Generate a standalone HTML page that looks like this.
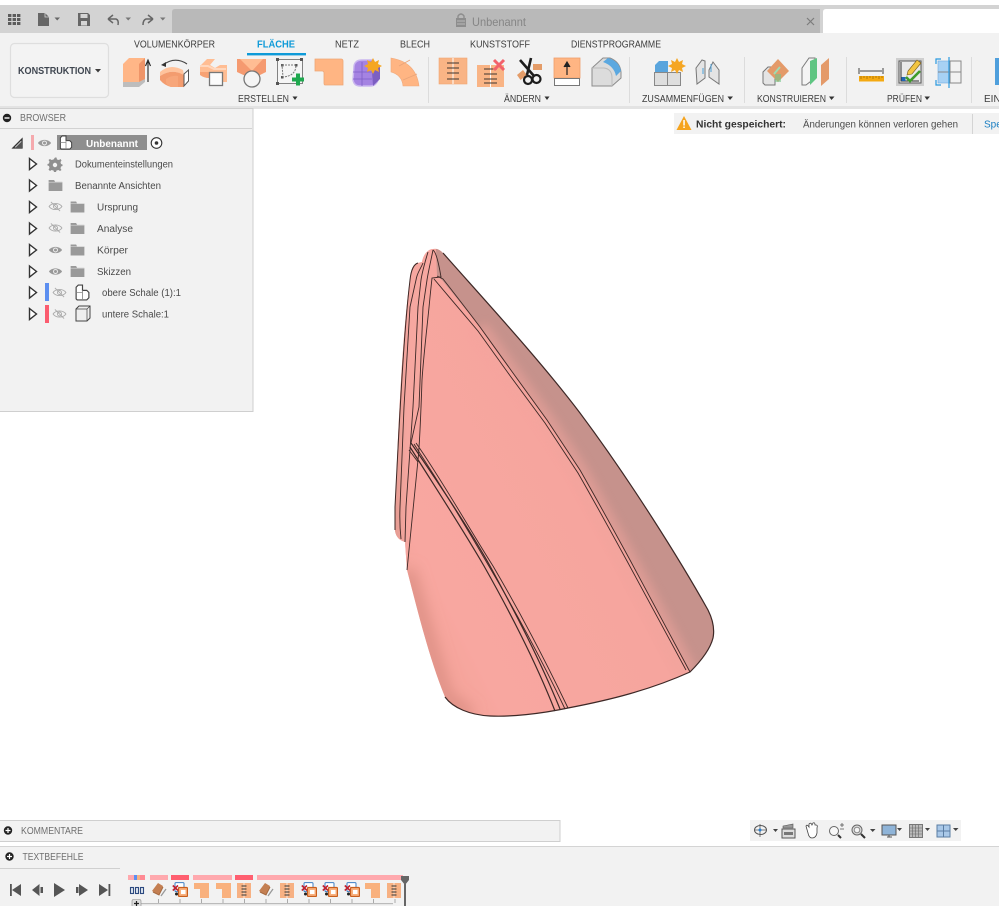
<!DOCTYPE html>
<html><head><meta charset="utf-8"><style>
html,body{margin:0;padding:0;background:#fff;width:999px;height:906px;overflow:hidden}
svg{display:block;filter:blur(.3px)}
text{font-family:"Liberation Sans",sans-serif}
.t{font-size:10px;fill:#3c3c3c}
.b{font-size:10px;fill:#4a4a4a}
.g{font-size:10px;fill:#6e6e6e}
</style></head><body>
<svg width="999" height="906" viewBox="0 0 999 906" xmlns="http://www.w3.org/2000/svg">
<defs>
<linearGradient id="main" gradientUnits="userSpaceOnUse" x1="405" y1="600" x2="640" y2="480"><stop offset="0" stop-color="#f4a399"/><stop offset=".14" stop-color="#f8a7a0"/><stop offset=".75" stop-color="#f6a59e"/><stop offset="1" stop-color="#eba29b"/></linearGradient>
<linearGradient id="strip" gradientUnits="userSpaceOnUse" x1="395" y1="0" x2="430" y2="0"><stop offset="0" stop-color="#e59c92"/><stop offset=".35" stop-color="#f5a7a0"/><stop offset="1" stop-color="#f8a8a1"/></linearGradient>
<filter id="bl6" x="-50%" y="-50%" width="200%" height="200%"><feGaussianBlur stdDeviation="7"/></filter>
<filter id="bl3" x="-50%" y="-50%" width="200%" height="200%"><feGaussianBlur stdDeviation="5"/></filter>
<clipPath id="bodyclip"><path d="M443 253C480 295 540 360 580 413C630 480 680 560 708 610C712 618 715 628 713 638C710 650 700 662 690 672C650 690 610 700 568 708C540 714 510 717 490 716C470 715 453 708 445 697C430 660 420 620 407 570L405 542C398 540 394 535 395 525C396 470 402 330 410 280C411 270 413 264 418 263L422 262C423 255 428 249 433 249C437 248 440 250 443 253Z"/></clipPath>
<symbol id="tri" viewBox="0 0 10 14"><path d="M1.500 1.500 L8.500 7 L1.500 12.500Z" fill="#fff" stroke="#333" stroke-width="1.400"/></symbol>
<symbol id="eye" viewBox="0 0 16 10"><path d="M1 5C4 0.500 12 0.500 15 5C12 9.500 4 9.500 1 5Z" fill="#999"/><circle cx="8" cy="5" r="2.600" fill="#f2f2f2"/><circle cx="8" cy="5" r="1.600" fill="#999"/></symbol>
<symbol id="eyeoff" viewBox="0 0 16 12"><path d="M1 6C4 1.500 12 1.500 15 6C12 10.500 4 10.500 1 6Z" fill="none" stroke="#aaa" stroke-width="1"/><circle cx="8" cy="6" r="2.200" fill="none" stroke="#aaa"/><path d="M3 1L13 11" stroke="#aaa" stroke-width="1"/></symbol>
<symbol id="folder" viewBox="0 0 15 12"><path d="M0 0H6L7 2H15V12H0Z" fill="#999"/><path d="M0 2.400H15" stroke="#ddd" stroke-width=".6"/></symbol>
<symbol id="part" viewBox="0 0 14 16"><path d="M1 14V3L3 1H7V6H11L13 8V13L11 15H2Z" fill="#fff" stroke="#444" stroke-width="1.100"/><path d="M7 6V15M1 8H7" stroke="#888" stroke-width=".8"/></symbol>
<symbol id="ell" viewBox="0 0 30 30"><path d="M1 3H27Q29 3 29 5V29H11Q10 29 10 27V17Q10 15 8 15H1Z" fill="#ffb583" stroke="#eea777" stroke-width=".8"/></symbol>
<symbol id="sew" viewBox="0 0 30 30"><rect x="1" y="2" width="28" height="26" fill="#f9b485" stroke="#f0a672" stroke-width=".6"/><path d="M15 2V28" stroke="#fff" stroke-width="1"/><path d="M9 7H21M9 12H21M9 17H21M9 23H21" stroke="#3d3530" stroke-width="1.100"/></symbol>
<symbol id="tsew" viewBox="0 0 14 15"><rect x="0" y="0" width="14" height="15" fill="#f7b183"/><path d="M7 0V15" stroke="#fff" stroke-width=".7"/><path d="M4.500 3H9.500M4.500 6H9.500M4.500 9H9.500M4.500 12H9.500" stroke="#333" stroke-width="1"/></symbol>
<symbol id="tell" viewBox="0 0 15 15"><path d="M0 0H15V15H6V6H0Z" fill="#f9b17e"/></symbol>
<symbol id="tsolid" viewBox="0 0 16 15"><path d="M1 9L7 1L12 4L8 13Z" fill="#c47f52"/><path d="M2 10L8 13L12 5" stroke="#a4683f" fill="none"/><path d="M10 14L15 7" stroke="#999" stroke-width="1.300"/></symbol>
<symbol id="tx" viewBox="0 0 16 15"><rect x="3" y="0.600" width="9" height="9" fill="#fff" stroke="#3d7fc4" stroke-width="1" rx="1"/><rect x="6.500" y="5.500" width="9" height="9" fill="#f9b17e" stroke="#c95f1e" stroke-width="1.200" rx="1"/><rect x="9" y="8" width="4.500" height="4" fill="#fff"/><path d="M.8 3.500L6 8.500M6 3.500L.8 8.500" stroke="#c2212e" stroke-width="1.600"/><circle cx="4.500" cy="12" r="1.500" fill="#222"/></symbol>
</defs>

<rect width="999" height="906" fill="#fff"/>

<!-- top bar -->
<rect x="0" y="5" width="999" height="28" fill="#d3d3d3"/>
<path d="M172 33V12Q172 9 175 9H820V33Z" fill="#b9b9b9"/>
<path d="M823 33V12Q823 9 826 9H999V33Z" fill="#fff"/>
<g fill="#5c5c5c"><rect x="8" y="14" width="3.400" height="3"/><rect x="12.600" y="14" width="3.400" height="3"/><rect x="17" y="14" width="3.400" height="3"/><rect x="8" y="18" width="3.400" height="3"/><rect x="12.600" y="18" width="3.400" height="3"/><rect x="17" y="18" width="3.400" height="3"/><rect x="8" y="22" width="3.400" height="3"/><rect x="12.600" y="22" width="3.400" height="3"/><rect x="17" y="22" width="3.400" height="3"/></g>
<path d="M38 13H45L49 17V26H38Z" fill="#666"/><path d="M45 13V17H49" fill="none" stroke="#d5d5d5" stroke-width=".8"/>
<path d="M54.500 17.500H60L57.200 20.500Z" fill="#666"/>
<path d="M78 13H88L90 15V26H78Z" fill="#666"/><rect x="80.500" y="14" width="7" height="4" fill="#d5d5d5"/><rect x="81" y="21" width="6" height="4.500" fill="#d5d5d5"/>
<path d="M108 19L113 15M108 19L113 23M108 19H116Q119 20 118 25" fill="none" stroke="#666" stroke-width="1.500"/>
<path d="M125.500 17.500H131L128.200 20.500Z" fill="#777"/>
<path d="M153 19L148 15M153 19L148 23M153 19H146Q143 20 143 25" fill="none" stroke="#666" stroke-width="1.500"/>
<path d="M160 17.500H165.500L162.800 20.500Z" fill="#777"/>
<rect x="456" y="18" width="10" height="9" fill="#8d8d8d"/><path d="M458 18V16Q461 12 464 16V18" fill="none" stroke="#8d8d8d" stroke-width="1.400"/><path d="M457 21H465M457 24H465" stroke="#b9b9b9"/>
<text x="472" y="26" font-size="12" fill="#858585" textLength="54" lengthAdjust="spacingAndGlyphs">Unbenannt</text>
<path d="M807 18L814 25M814 18L807 25" stroke="#7c7c7c" stroke-width="1.200"/>

<!-- ribbon -->
<rect x="0" y="33" width="999" height="73" fill="#f2f2f2"/>
<rect x="0" y="106" width="999" height="3" fill="#e3e3e3"/>
<rect x="10.500" y="43.500" width="98" height="54" rx="4" fill="#f3f3f3" stroke="#dedede" stroke-width="1.200"/>
<text x="18" y="74" font-size="10" font-weight="bold" fill="#3f4650" textLength="73" lengthAdjust="spacingAndGlyphs">KONSTRUKTION</text>
<path d="M95 69H101L98 72.500Z" fill="#3c3c3c"/>
<text class="t" x="134" y="47.500" textLength="81" lengthAdjust="spacingAndGlyphs">VOLUMENKÖRPER</text>
<text x="257" y="47.500" font-size="10" font-weight="bold" fill="#0e9ad8" textLength="38" lengthAdjust="spacingAndGlyphs">FLÄCHE</text>
<rect x="247" y="53" width="59" height="2.400" fill="#0e9ad8"/>
<text class="t" x="335" y="47.500" textLength="24" lengthAdjust="spacingAndGlyphs">NETZ</text>
<text class="t" x="400" y="47.500" textLength="30" lengthAdjust="spacingAndGlyphs">BLECH</text>
<text class="t" x="470" y="47.500" textLength="60" lengthAdjust="spacingAndGlyphs">KUNSTSTOFF</text>
<text class="t" x="571" y="47.500" textLength="90" lengthAdjust="spacingAndGlyphs">DIENSTPROGRAMME</text>
<text class="t" x="238" y="102" textLength="51" lengthAdjust="spacingAndGlyphs">ERSTELLEN</text><path d="M292.500 96.500H297.500L295 100Z" fill="#333"/>
<text class="t" x="504" y="102" textLength="37" lengthAdjust="spacingAndGlyphs">ÄNDERN</text><path d="M544.500 96.500H549.500L547 100Z" fill="#333"/>
<text class="t" x="642" y="102" textLength="82" lengthAdjust="spacingAndGlyphs">ZUSAMMENFÜGEN</text><path d="M727.500 96.500H733L730 100Z" fill="#333"/>
<text class="t" x="757" y="102" textLength="69" lengthAdjust="spacingAndGlyphs">KONSTRUIEREN</text><path d="M829 96.500H834.500L831.500 100Z" fill="#333"/>
<text class="t" x="887" y="102" textLength="35" lengthAdjust="spacingAndGlyphs">PRÜFEN</text><path d="M924.500 96.500H930L927 100Z" fill="#333"/>
<text class="t" x="984" y="102">EINFÜGEN</text>
<g fill="#dcdcdc"><rect x="428" y="57" width="1" height="46"/><rect x="629" y="57" width="1" height="46"/><rect x="744" y="57" width="1" height="46"/><rect x="846" y="57" width="1" height="46"/><rect x="971" y="57" width="1" height="46"/></g>

<!-- extrude -->
<path d="M123 64L129 58H145V80L142 82H123Z" fill="#ffb687"/><path d="M139 64L145 58V79L139 82Z" fill="#ef9468"/><path d="M123 64H139V82H123Z" fill="#ffb687"/>
<path d="M123 82H139L145 79V82L139 87H123Z" fill="#bdbdbd"/>
<path d="M148 82V62M145.500 66L148 60L150.500 66" fill="none" stroke="#222" stroke-width="1.100"/>
<!-- revolve -->
<path d="M160 72Q170 63 183 70L184 75Q172 68 160 76Z" fill="#ffc39c"/>
<path d="M160 76Q172 68 184 75V87H171Q164 85 160 80Z" fill="#f39c6f"/>
<path d="M166 79Q172 75 178 76V87H171Q166 85 166 82Z" fill="#f7a67a"/>
<path d="M184 74L188.500 70V81L184 86Z" fill="#fff" stroke="#555"/>
<path d="M163 65Q175 56 187 64" fill="none" stroke="#444" stroke-width="1.100"/><path d="M161 65L166 62V67Z" fill="#333"/>
<!-- patch -->
<path d="M200 66L207 59H215L210 65L215 68L220 65H227V82H222V72H200Z" fill="#ffbd93"/><path d="M200 66H208L214 69H226" stroke="#ffd7bd" stroke-width="2" fill="none"/>
<path d="M200 72H209V78Q204 78 200 75Z" fill="#f7a274"/>
<rect x="209.500" y="72.500" width="13" height="13" fill="#fbfbfb" stroke="#777" stroke-width="1.300"/>
<!-- loft -->
<path d="M237 59H266V72L252 79L237 72Z" fill="#f59a70"/><path d="M240 59H263L252 71Z" fill="#ffbd93"/>
<circle cx="252" cy="79" r="8" fill="#f5f5f5" stroke="#777" stroke-width="1.300"/>
<!-- sketch -->
<rect x="277.500" y="59.500" width="25" height="24" fill="#f5f5f5" stroke="#666" stroke-width=".8"/>
<g fill="#555"><rect x="276" y="58" width="3" height="3"/><rect x="300" y="58" width="3" height="3"/><rect x="276" y="82" width="3" height="3"/><rect x="281" y="64" width="2.500" height="2.500"/><rect x="281" y="76" width="2.500" height="2.500"/><rect x="295" y="64" width="2.500" height="2.500"/></g>
<path d="M282 65H296Q296 76 283 77Z" fill="none" stroke="#777" stroke-dasharray="2 1"/>
<rect x="292" y="77.500" width="12" height="4" fill="#1fa84f"/><rect x="296" y="73.500" width="4" height="12" fill="#1fa84f"/>
<use href="#ell" x="314" y="56" width="30" height="30"/>
<!-- purple -->
<path d="M354 66Q355 60 362 60H372L378 66V80Q376 86 370 86H360Q354 86 353 80Z" fill="#a583e2" stroke="#c9b6ef" stroke-width="1.400"/>
<path d="M372 72L380 66V79L373 86Z" fill="#7d5fc2"/><path d="M353 72H372M362 62V86M353 79H372" stroke="#7e5fc6" stroke-width=".8"/>
<path d="M373 58L375 62L379 60L378 64L382 66L378 68L379 72L375 70L373 74L371 70L367 72L368 68L364 66L368 64L367 60L371 62Z" fill="#f5a623"/>
<!-- arc -->
<path d="M391 58Q416 62 419 86H403Q402 75 391 72Z" fill="#ffb583" stroke="#f0aa7c" stroke-width=".6"/><path d="M399 66L410 60M403 80L417 74" stroke="#e8a47a" stroke-width=".8"/>
<use href="#sew" x="438" y="56" width="30" height="30"/>
<g transform="translate(477,65)"><rect width="27" height="22" fill="#f9b485"/><path d="M13.500 0V22" stroke="#fff"/><path d="M7 4H20M7 9H20M7 14H20M7 18H20" stroke="#3d3530" stroke-width="1.100"/></g>
<path d="M494 60L504 70M504 60L494 70" stroke="#f2616b" stroke-width="3"/>
<!-- scissors -->
<path d="M517 75L523 70L527 75L520.500 80Z" fill="#e49c68"/><rect x="533" y="64" width="9" height="6" fill="#e49c68"/>
<path d="M520 60L534 76M531 58L527 75" stroke="#1c1c1c" stroke-width="2.600"/>
<circle cx="528" cy="80" r="4" fill="#f2f2f2" stroke="#1c1c1c" stroke-width="2.200"/><circle cx="536.500" cy="79" r="4" fill="#f2f2f2" stroke="#1c1c1c" stroke-width="2.200"/>
<!-- thicken up -->
<rect x="554" y="58" width="26" height="20" fill="#ffb583" stroke="#ef9e6b" stroke-width=".8"/><path d="M567 75V64M564 67L567 62L570 67" fill="#222" stroke="#222" stroke-width="1.200"/>
<rect x="554.500" y="78.500" width="25" height="7" fill="#fff" stroke="#777" stroke-width="1"/>
<!-- fillet -->
<path d="M592 68L603 58H610Q620 62 621 72V78L612 86H592Z" fill="#dcdcdc" stroke="#8c8c8c"/>
<path d="M603 62L608 58Q619 61 621 71L616 76Q614 66 603 62Z" fill="#5ba8e0"/><path d="M592 68H604Q612 69 612 78V86" fill="none" stroke="#bbb"/>
<!-- combine -->
<rect x="654.500" y="72.500" width="13" height="13" fill="#dedede" stroke="#888"/><rect x="667.500" y="72.500" width="13" height="13" fill="#dedede" stroke="#888"/>
<path d="M655 65L659 61H668V72H655Z" fill="#5aa5dd"/>
<path d="M677 58L679 62L683 60L682 64L686 66L682 68L683 72L679 70L677 74L675 70L671 72L672 68L668 66L672 64L671 60L675 62Z" fill="#f5a623"/>
<!-- joint -->
<path d="M696 68L702 60L705 61V78L697 84Z" fill="#e4e4e4" stroke="#777"/><path d="M713 62L719 70V84L709 77V70Z" fill="#e4e4e4" stroke="#777"/><path d="M703 68V74M711 64V72" stroke="#4a9fd8"/>
<!-- construct -->
<path d="M763 72L768 67H775V85H765L763 83Z" fill="#e4e4e4" stroke="#777"/>
<path d="M767 71L778 59L789 71L778 82Z" fill="#e49a69"/><path d="M774 74L780 67" stroke="#9fdcb1" stroke-width="2"/><path d="M775 74H781V82H775Z" fill="#74c78a" opacity=".6"/>
<path d="M802 68L809 58H815V78L806 85H802Z" fill="#f4f4f4" stroke="#7b7b7b"/>
<path d="M810 61L817 58V78L810 85Z" fill="#5fc582"/><path d="M821 65L829 58V79L821 86Z" fill="#e49a69"/>
<!-- ruler -->
<path d="M859 68V74M883 68V74M860 71H882" stroke="#444" fill="none"/>
<rect x="859" y="76" width="25" height="5.500" fill="#f4a911"/><path d="M861 76V79M864 76V78M867 76V79M870 76V78M873 76V79M876 76V78M879 76V79M882 76V78" stroke="#8a5c00" stroke-width=".6"/>
<!-- inspector -->
<rect x="896" y="58" width="28" height="28" fill="#cfcfcf"/>
<rect x="899" y="61" width="22" height="22" fill="#e9e9e9" stroke="#5a5a5a"/>
<path d="M901 62V81H919" stroke="#333" fill="none"/><rect x="901.500" y="77" width="4" height="4" fill="#2166b8"/>
<path d="M908 71L917 60L921 63L912 74L907 75Z" fill="#f2c542" stroke="#7a5c1a" stroke-width=".6"/>
<path d="M906 77L910 81L920 71" stroke="#3f9c2b" stroke-width="2.600" fill="none"/>
<!-- section -->
<rect x="938" y="61" width="12" height="22" fill="#a7d1f4" stroke="#6ea9de" stroke-width=".6"/><rect x="950" y="61" width="11" height="22" fill="#f2f2f2" stroke="#888"/><path d="M938 72H961" stroke="#888"/>
<path d="M949 57V88" stroke="#2a9ae0" stroke-width="1.200"/><path d="M941 59H936V64M936 80V85H941" stroke="#2a9ae0" stroke-width="1.200" fill="none"/>
<rect x="995" y="58" width="4" height="27" fill="#4f9fdc"/>

<!-- notification -->
<rect x="674" y="113" width="325" height="21" fill="#f2f2f2"/>
<rect x="972" y="114" width="1" height="20" fill="#d4d4d4"/>
<path d="M684 116L691.500 130H676.500Z" fill="#f5a41f"/><rect x="683.300" y="120" width="1.500" height="5.500" fill="#fff"/><rect x="683.300" y="126.500" width="1.500" height="1.500" fill="#fff"/>
<text x="696" y="127.500" font-size="10" font-weight="bold" fill="#333" textLength="90" lengthAdjust="spacingAndGlyphs">Nicht gespeichert:</text>
<text x="803" y="127.500" font-size="10" fill="#4a4a4a" textLength="155" lengthAdjust="spacingAndGlyphs">Änderungen können verloren gehen</text>
<text x="984" y="127.500" font-size="10" fill="#1b7fc2">Speichern</text>

<!-- browser -->
<rect x="-1" y="108.500" width="254" height="303" fill="#f2f2f2" stroke="#cfcfcf"/>
<rect x="0" y="128" width="252" height="1" fill="#d2d2d2"/>
<circle cx="7" cy="118" r="4.200" fill="#222"/><rect x="4.500" y="117.300" width="5" height="1.400" fill="#fff"/>
<text class="g" x="20" y="121" textLength="46" lengthAdjust="spacingAndGlyphs">BROWSER</text>
<path d="M13 148L22 139V148Z" fill="none" stroke="#333" stroke-width="1.300"/><path d="M15 148L22 141V148Z" fill="#555"/>
<rect x="31" y="135" width="3" height="15" fill="#f5a9ad"/>
<use href="#eye" x="37" y="138" width="15" height="10"/>
<rect x="57" y="135" width="90" height="15" fill="#8e8e8e"/>
<use href="#part" x="59" y="135" width="14" height="15"/>
<text x="86" y="147" font-size="10" font-weight="bold" fill="#fff" textLength="52" lengthAdjust="spacingAndGlyphs">Unbenannt</text>
<circle cx="156.500" cy="143" r="5.300" fill="#fff" stroke="#333" stroke-width="1.100"/><circle cx="156.500" cy="143" r="1.800" fill="#333"/>
<use href="#tri" x="28" y="157" width="10" height="14"/>
<path d="M55 157.500L56.500 157.500L57 159.500L59 160L60.500 159L61.500 160.500L60.500 162L61 164L62.500 164.500V166L61 166.500L60.500 168.500L61.500 170L60 171L58.500 170L56.500 170.500L56 172H54L53.500 170.500L51.500 170L50 171L48.500 169.500L49.500 168L49 166L47.500 165.500V164L49 163.500L49.500 161.500L48.500 160L50 159L51.500 160L53.500 159.500Z" fill="#8f8f8f"/><circle cx="55" cy="165" r="2.200" fill="#f2f2f2"/>
<text class="b" x="75" y="167.500" textLength="98" lengthAdjust="spacingAndGlyphs">Dokumenteinstellungen</text>
<use href="#tri" x="28" y="178.500" width="10" height="14"/>
<use href="#folder" x="48" y="180" width="15" height="11"/>
<text class="b" x="75" y="189" textLength="86" lengthAdjust="spacingAndGlyphs">Benannte Ansichten</text>
<use href="#tri" x="28" y="200" width="10" height="14"/>
<use href="#eyeoff" x="48" y="201" width="15" height="11"/>
<use href="#folder" x="70" y="201.500" width="15" height="11"/>
<text class="b" x="97" y="210.500" textLength="41" lengthAdjust="spacingAndGlyphs">Ursprung</text>
<use href="#tri" x="28" y="221.500" width="10" height="14"/>
<use href="#eyeoff" x="48" y="222.500" width="15" height="11"/>
<use href="#folder" x="70" y="223" width="15" height="11"/>
<text class="b" x="97" y="232" textLength="36" lengthAdjust="spacingAndGlyphs">Analyse</text>
<use href="#tri" x="28" y="243" width="10" height="14"/>
<use href="#eye" x="48" y="245" width="15" height="10"/>
<use href="#folder" x="70" y="244.500" width="15" height="11"/>
<text class="b" x="97" y="253.500" textLength="31" lengthAdjust="spacingAndGlyphs">Körper</text>
<use href="#tri" x="28" y="264.500" width="10" height="14"/>
<use href="#eye" x="48" y="266.500" width="15" height="10"/>
<use href="#folder" x="70" y="266" width="15" height="11"/>
<text class="b" x="97" y="275" textLength="34" lengthAdjust="spacingAndGlyphs">Skizzen</text>
<use href="#tri" x="28" y="285.500" width="10" height="14"/>
<rect x="45" y="283" width="4" height="18" fill="#5c8ff0"/>
<use href="#eyeoff" x="52" y="287" width="15" height="11"/>
<use href="#part" x="75" y="284" width="15" height="17"/>
<text class="b" x="102" y="296" textLength="79" lengthAdjust="spacingAndGlyphs">obere Schale (1):1</text>
<use href="#tri" x="28" y="307" width="10" height="14"/>
<rect x="45" y="305" width="4" height="18" fill="#fb5c6f"/>
<use href="#eyeoff" x="52" y="308.500" width="15" height="11"/>
<path d="M76 309L79 306H90V318L87 321H76Z" fill="#efefef" stroke="#444"/><path d="M76 309H87V321M87 309L90 306" fill="none" stroke="#444" stroke-width=".7"/>
<text class="b" x="102" y="317.500" textLength="67" lengthAdjust="spacingAndGlyphs">untere Schale:1</text>

<!-- 3D body -->
<path d="M443 253C480 295 540 360 580 413C630 480 680 560 708 610C712 618 715 628 713 638C710 650 700 662 690 672C650 690 610 700 568 708C540 714 510 717 490 716C470 715 453 708 445 697C430 660 420 620 407 570L405 542C398 540 394 535 395 525C396 470 402 330 410 280C411 270 413 264 418 263L422 262C423 255 428 249 433 249C437 248 440 250 443 253Z" fill="url(#main)"/>
<g clip-path="url(#bodyclip)">
<!-- left strips -->
<path d="M390 240H434L428 273L423 307L419 407L411 443L407 570L390 570Z" fill="url(#strip)"/>
<!-- shaded side -->
<path d="M436 248L460 250L720 600L720 680L690 672L630 560L580 470L547 420L513 373L480 327L442 280L437 276Z" fill="#c6928c"/>
<!-- soft transition along the inner edge of the shaded side -->
<path d="M480 327L513 373L547 420L580 470L630 560L690 672" fill="none" stroke="#f3a59e" stroke-width="14" filter="url(#bl3)" opacity=".55"/>
<!-- lower-left shading -->
<path d="M407 570L445 697L470 716" fill="none" stroke="#dd9085" stroke-width="14" filter="url(#bl6)"/>
</g>
<g fill="none" stroke="#3d2826" stroke-width=".9">
<path d="M443 253C480 295 540 360 580 413C630 480 680 560 708 610C712 618 715 628 713 638C710 650 700 662 690 672C650 690 610 700 568 708C540 714 510 717 490 716C470 715 453 708 445 697" stroke-width="1.200"/>
<path d="M418 263C414 264 411 270 410 280C404 330 400 407 395 507C395 515 395 525 395 530" stroke-width="1"/>
<path d="M423 263C420 270 417 273 416 280L410 307L404 407L400 507C399.500 520 400 530 401 539"/>
<path d="M428 252C425 262 422 273 421 280L418 307L413 407L406 507L405 542"/>
<path d="M433 250C431 260 428 273 427 280L423 307L419 407L411 443"/>
<path d="M433 250C436 252 439 265 441 277L432 278L430 297"/>
<path d="M430 297C428 320 424 350 422 380C421 410 420 440 418 460L407 570"/>
<path d="M437 276L443 279C458 298 480 327 480 327C490 341 513 373 513 373L547 420L580 470C600 505 630 560 630 560L690 672"/>
<path d="M434 279C450 298 478 331 478 331L511 377L545 423L578 473C598 508 627 561 627 561L686 670"/>
<path d="M411 443C440 485 470 530 490 566C515 612 540 660 560 709" stroke-width="1.200"/>
<path d="M410 447C437 490 462 528 484 566C510 612 535 660 555 711" stroke-width="1.200"/>
<path d="M416 443C442 480 470 530 493 566C520 612 545 660 568 708"/>
<path d="M414 444C440 484 468 530 490 568C517 614 542 660 565 709"/>
<path d="M409 450L418 462"/>
</g>

<!-- kommentare / textbefehle -->
<rect x="-1" y="820.500" width="561" height="21" fill="#f2f2f2" stroke="#cfcfcf"/>
<circle cx="8" cy="830.500" r="4.200" fill="#222"/><path d="M5.500 830.500H10.500M8 828V833" stroke="#fff" stroke-width="1.200"/>
<text class="g" x="21" y="834" textLength="62" lengthAdjust="spacingAndGlyphs">KOMMENTARE</text>
<rect x="750" y="820" width="211" height="21" fill="#f2f2f2"/>
<rect x="-1" y="846.500" width="1001" height="60" fill="#f2f2f2" stroke="#d4d4d4"/>
<rect x="0" y="868" width="120" height="1" fill="#d0d0d0"/>
<circle cx="9.500" cy="856.500" r="4.200" fill="#222"/><path d="M7 856.500H12M9.500 854V859" stroke="#fff" stroke-width="1.200"/>
<text class="g" x="22.500" y="860" textLength="61" lengthAdjust="spacingAndGlyphs">TEXTBEFEHLE</text>

<!-- nav bar icons -->
<path d="M760 824V837M754 830H767" stroke="#555" stroke-width=".8"/><ellipse cx="760.500" cy="830" rx="6" ry="4.500" fill="none" stroke="#555"/><circle cx="760" cy="830" r="1.500" fill="#2a7fd0"/>
<path d="M773 829H778L775.500 832Z" fill="#444"/>
<rect x="782" y="829" width="13" height="9" fill="#ddd" stroke="#555"/><path d="M783 826L793 824V828H783Z" fill="#999" stroke="#555" stroke-width=".6"/><rect x="784" y="832" width="9" height="3" fill="#777"/>
<path d="M808 833L806 826Q807 824 809 827L809 824Q811 822 812 825L813 823Q815 822 815 825L816 825Q818 825 817 828L817 833Q816 838 812 838Q809 838 808 833Z" fill="#fff" stroke="#444" stroke-width=".8"/>
<circle cx="834" cy="831" r="4.500" fill="#f8f8f8" stroke="#666"/><path d="M838 835L841 838" stroke="#333" stroke-width="2"/><path d="M840 825H844M842 823V827M840 829H844" stroke="#555" stroke-width=".8"/>
<circle cx="857" cy="830" r="5" fill="#ddd" stroke="#666"/><circle cx="857" cy="830" r="2.800" fill="#f4f4f4" stroke="#888"/><path d="M861 834L865 838" stroke="#333" stroke-width="2"/>
<path d="M870 829H875.500L872.700 832Z" fill="#444"/>
<rect x="882" y="825" width="14" height="10" fill="#8fb4d8" stroke="#555"/><path d="M887 837H892M889 835V837" stroke="#555"/>
<path d="M897 828H902L899.500 831Z" fill="#444"/>
<rect x="909.500" y="824.500" width="13" height="13" fill="#bbb" stroke="#777"/><path d="M912.500 825V837M915.500 825V837M918.500 825V837M910 828H922M910 831H922M910 834H922" stroke="#666" stroke-width=".6"/>
<path d="M925 828H930L927.500 831Z" fill="#444"/>
<rect x="937" y="825" width="13" height="12" fill="#a9c8e8" stroke="#5a7da3"/><path d="M943.500 825V837M937 831H950" stroke="#5a7da3"/>
<path d="M953 828H958.500L955.700 831Z" fill="#444"/>

<!-- timeline -->
<rect x="128" y="875" width="6" height="5" fill="#ffa9ae"/><rect x="134" y="875" width="3" height="5" fill="#5c8ff0"/><rect x="137" y="875" width="3" height="5" fill="#f7b183"/><rect x="140" y="875" width="5" height="5" fill="#ff8a94"/>
<rect x="150" y="875" width="18" height="5" fill="#ffa9ae"/><rect x="171" y="875" width="18" height="5" fill="#ff5f70"/><rect x="193" y="875" width="39" height="5" fill="#ffa9ae"/><rect x="235" y="875" width="18" height="5" fill="#ff5f70"/><rect x="257" y="875" width="146" height="5" fill="#ffa9ae"/>
<g fill="#e0e8f0" stroke="#2d4a80" stroke-width="1.100"><rect x="130.500" y="887.500" width="3" height="6"/><rect x="135.500" y="887.500" width="3" height="6"/><rect x="140.500" y="887.500" width="3" height="6"/></g>
<use href="#tsolid" x="151" y="882" width="16" height="15"/>
<use href="#tx" x="172" y="882" width="16" height="15"/>
<use href="#tell" x="194" y="883" width="15" height="15"/>
<use href="#tell" x="216" y="883" width="15" height="15"/>
<use href="#tsew" x="237" y="883" width="14" height="15"/>
<use href="#tsolid" x="258" y="882" width="16" height="15"/>
<use href="#tsew" x="280" y="883" width="14" height="15"/>
<use href="#tx" x="301" y="882" width="16" height="15"/>
<use href="#tx" x="322" y="882" width="16" height="15"/>
<use href="#tx" x="344" y="882" width="16" height="15"/>
<use href="#tell" x="365" y="883" width="15" height="15"/>
<use href="#tsew" x="387" y="883" width="14" height="15"/>
<rect x="136" y="903" width="257" height="1.200" fill="#bbb"/>
<g stroke="#aaa"><path d="M158.500 899V903M180 899V903M201.500 899V903M223 899V903M244.500 899V903M266 899V903M287.500 899V903M309 899V903M330.500 899V903M352 899V903M373.500 899V903M395 899V903"/></g>
<rect x="132" y="899.500" width="9" height="8" fill="#ddd" stroke="#888" stroke-width=".6" rx="1.500"/><path d="M134 903.500H139M136.500 901V906" stroke="#222" stroke-width="1.200"/>
<path d="M401 876H409V880L405 885L401 880Z" fill="#666"/><rect x="404" y="884" width="2" height="22" fill="#666"/>
<g fill="#555">
<rect x="10" y="884" width="1.800" height="12"/><path d="M21 884V896L12 890Z"/>
<path d="M39.500 884V896L32 890Z"/><rect x="40.500" y="887" width="2.500" height="6"/>
<path d="M54 883V897L65 890Z"/>
<rect x="76" y="887" width="2.500" height="6"/><path d="M79 884V896L88 890Z"/>
<path d="M99 884V896L108 890Z"/><rect x="108.500" y="884" width="1.800" height="12"/>
</g>
</svg>
</body></html>
